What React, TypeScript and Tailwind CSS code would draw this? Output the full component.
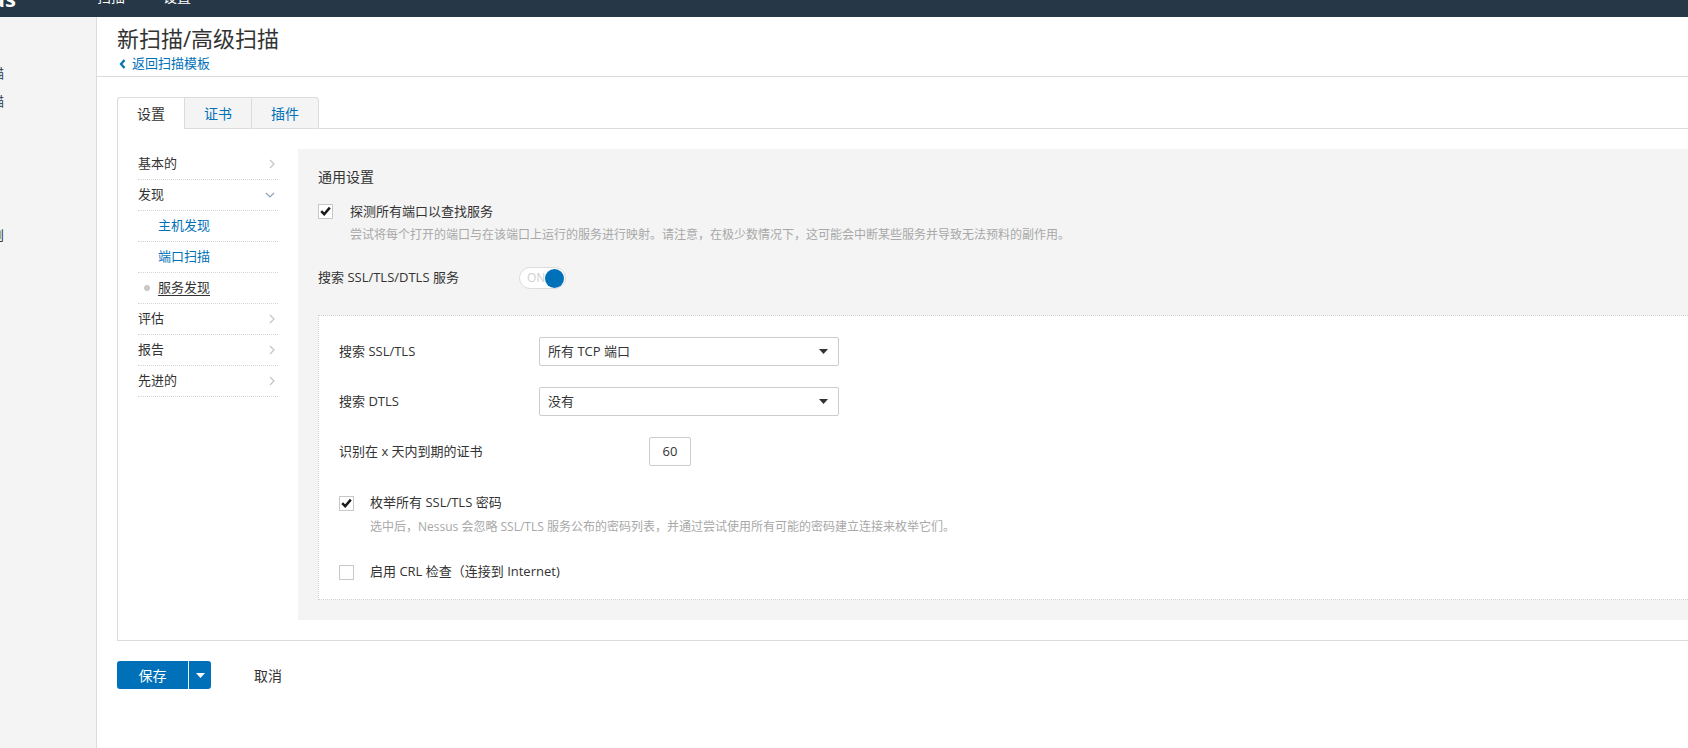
import React from "react";

function ChevronRight() {
  return (
    <svg width="6" height="10" viewBox="0 0 6 10" className="shrink-0">
      <path d="M1 1l4 4-4 4" stroke="#c4c4c4" strokeWidth="1.2" fill="none" />
    </svg>
  );
}

function ChevronDown() {
  return (
    <svg width="10" height="6" viewBox="0 0 10 6" className="shrink-0">
      <path d="M1 1l4 4 4-4" stroke="#8aa4bb" strokeWidth="1.2" fill="none" />
    </svg>
  );
}

function Check() {
  return (
    <svg width="11" height="10" viewBox="0 0 11 10">
      <path d="M1.2 5.2l3 3L9.8 1.6" stroke="#1a1a1a" strokeWidth="2.5" fill="none" strokeLinejoin="miter" />
    </svg>
  );
}

function Checkbox({ checked }: { checked: boolean }) {
  return (
    <div className="w-[15px] h-[15px] shrink-0 bg-white border border-[#c8c8c8] flex items-center justify-center">
      {checked && <Check />}
    </div>
  );
}

function Caret({ color }: { color: string }) {
  return (
    <svg width="9" height="5" viewBox="0 0 9 5">
      <path d="M0 0h9L4.5 5z" fill={color} />
    </svg>
  );
}

function MenuRow({
  label,
  kind,
}: {
  label: string;
  kind: "right" | "down" | "sub" | "current";
}) {
  return (
    <div className="h-[31px] border-b border-dotted border-[#d6d6d6] flex items-center text-[13px]">
      {kind === "sub" && <span className="pl-[20px] text-[#0071b9]">{label}</span>}
      {kind === "current" && (
        <>
          <span className="w-[6px] h-[6px] rounded-full bg-[#c8c8c8] ml-[6px]" />
          <span className="ml-[8px] text-[#333] underline underline-offset-[3px]">{label}</span>
        </>
      )}
      {(kind === "right" || kind === "down") && (
        <>
          <span className="text-[#333]">{label}</span>
          <span className="ml-auto mr-[3px] flex items-center">
            {kind === "right" ? <ChevronRight /> : <ChevronDown />}
          </span>
        </>
      )}
    </div>
  );
}

export default function App() {
  return (
    <div className="w-[1688px] h-[748px] overflow-hidden flex flex-col bg-white text-[#333] font-[family-name:'Open_Sans','Noto_Sans_CJK_SC',sans-serif]">
      {/* top bar */}
      <div className="h-[17px] shrink-0 bg-[#263848] flex overflow-hidden">
        <div className="w-[16px] shrink-0 flex justify-end overflow-hidden">
          <span className="text-[22px] font-bold text-white leading-[22px] -mt-[13px] whitespace-nowrap">
            nessus
          </span>
        </div>
        <span className="ml-[81px] text-white text-[14px] leading-[16px] -mt-[11px] whitespace-nowrap">扫描</span>
        <span className="ml-[38px] text-white text-[14px] leading-[16px] -mt-[11px] whitespace-nowrap">设置</span>
      </div>

      <div className="flex flex-1 min-h-0">
        {/* sidebar */}
        <div className="w-[97px] shrink-0 bg-[#f4f4f4] border-r border-[#dcdcdc] overflow-hidden">
          <div className="-ml-[48px] pt-[42px] text-[13px] leading-[28px] whitespace-nowrap">
            <div className="text-[#2a3a4a]">我的扫描</div>
            <div className="text-[#2a3a4a]">所有扫描</div>
            <div className="text-[#333]">回收站</div>
            <div className="mt-[22px] text-[11px] leading-[28px] text-[#999]">资源</div>
            <div className="text-[#333]">策略</div>
            <div className="text-[#333]">插件规则</div>
          </div>
        </div>

        {/* main */}
        <div className="flex-1 min-w-0 overflow-hidden flex flex-col">
          <div className="px-[20px] pt-[6px] pb-[3px] border-b border-[#dcdcdc]">
            <h1 className="text-[22px] leading-[30px] text-[#333] font-normal">新扫描/高级扫描</h1>
            <div className="flex items-center h-[18px] mt-[2px] text-[13px] text-[#0071b9]">
              <svg width="7" height="10" viewBox="0 0 7 10" className="ml-[2px]">
                <path d="M5.5 1L2 5l3.5 4" stroke="#0071b9" strokeWidth="2.2" fill="none" />
              </svg>
              <span className="ml-[6px]">返回扫描模板</span>
            </div>
          </div>

          <div className="pl-[20px] pt-[20px]">
            <div className="w-[1700px]">
              {/* tabs */}
              <div className="flex h-[32px] text-[14px]">
                <div className="w-[67px] border-l border-t border-[#dcdcdc] bg-white rounded-tl-[3px] flex items-center justify-center text-[#333]">
                  设置
                </div>
                <div className="w-[67px] border-l border-t border-b border-[#dcdcdc] bg-[#f4f4f4] flex items-center justify-center text-[#0071b9]">
                  证书
                </div>
                <div className="w-[68px] border-l border-r border-t border-b border-[#dcdcdc] bg-[#f4f4f4] rounded-tr-[3px] flex items-center justify-center text-[#0071b9]">
                  插件
                </div>
                <div className="flex-1 border-b border-[#dcdcdc]" />
              </div>

              {/* panel */}
              <div className="border-l border-r border-b border-[#dcdcdc] p-[20px] flex">
                <div className="w-[140px] shrink-0">
                  <MenuRow label="基本的" kind="right" />
                  <MenuRow label="发现" kind="down" />
                  <MenuRow label="主机发现" kind="sub" />
                  <MenuRow label="端口扫描" kind="sub" />
                  <MenuRow label="服务发现" kind="current" />
                  <MenuRow label="评估" kind="right" />
                  <MenuRow label="报告" kind="right" />
                  <MenuRow label="先进的" kind="right" />
                </div>

                <div className="flex-1 ml-[20px] bg-[#f4f4f4] px-[20px] pt-[18px] pb-[20px]">
                  <div className="text-[14px] leading-[20px] text-[#333]">通用设置</div>

                  <div className="mt-[14px] flex items-center h-[20px]">
                    <Checkbox checked />
                    <span className="ml-[17px] text-[13px] leading-[20px] text-[#333]">探测所有端口以查找服务</span>
                  </div>
                  <div className="mt-[5px] ml-[32px] text-[12px] leading-[18px] text-[#a8a8a8]">
                    尝试将每个打开的端口与在该端口上运行的服务进行映射。请注意，在极少数情况下，这可能会中断某些服务并导致无法预料的副作用。
                  </div>

                  <div className="mt-[23px] flex items-center h-[22px]">
                    <span className="w-[201px] text-[13px] text-[#333]">搜索 SSL/TLS/DTLS 服务</span>
                    <div className="w-[47px] h-[22px] rounded-full bg-white border border-[#dcdcdc] flex items-center pl-[7px] pr-[1px]">
                      <span className="text-[12px] leading-none text-[#cfcfcf]">ON</span>
                      <span className="ml-auto w-[19px] h-[19px] rounded-full bg-[#0071b9]" />
                    </div>
                  </div>

                  <div className="mt-[26px] bg-white border border-dotted border-[#cfcfcf] pl-[20px] pt-[21px] pb-[17px]">
                    <div className="flex items-center h-[29px]">
                      <span className="w-[200px] text-[13px] text-[#333]">搜索 SSL/TLS</span>
                      <div className="w-[300px] h-[29px] bg-white border border-[#cccccc] rounded-[2px] flex items-center pl-[8px] pr-[10px] text-[13px] text-[#333]">
                        <span>所有 TCP 端口</span>
                        <span className="ml-auto flex"><Caret color="#333" /></span>
                      </div>
                    </div>
                    <div className="mt-[21px] flex items-center h-[29px]">
                      <span className="w-[200px] text-[13px] text-[#333]">搜索 DTLS</span>
                      <div className="w-[300px] h-[29px] bg-white border border-[#cccccc] rounded-[2px] flex items-center pl-[8px] pr-[10px] text-[13px] text-[#333]">
                        <span>没有</span>
                        <span className="ml-auto flex"><Caret color="#333" /></span>
                      </div>
                    </div>
                    <div className="mt-[21px] flex items-center h-[29px]">
                      <span className="w-[310px] text-[13px] text-[#333]">识别在 x 天内到期的证书</span>
                      <div className="w-[42px] h-[29px] bg-white border border-[#cccccc] rounded-[2px] flex items-center justify-center text-[13px] text-[#333]">
                        60
                      </div>
                    </div>

                    <div className="mt-[27px] flex items-center h-[20px]">
                      <Checkbox checked />
                      <span className="ml-[16px] text-[13px] text-[#333]">枚举所有 SSL/TLS 密码</span>
                    </div>
                    <div className="mt-[5px] ml-[31px] text-[12px] leading-[18px] text-[#a8a8a8]">
                      选中后，Nessus 会忽略 SSL/TLS 服务公布的密码列表，并通过尝试使用所有可能的密码建立连接来枚举它们。
                    </div>

                    <div className="mt-[26px] flex items-center h-[20px]">
                      <Checkbox checked={false} />
                      <span className="ml-[16px] text-[13px] text-[#333]">启用 CRL 检查（连接到 Internet)</span>
                    </div>
                  </div>
                </div>
              </div>

              {/* buttons */}
              <div className="mt-[20px] flex items-center">
                <div className="h-[28px] flex rounded-[3px] overflow-hidden">
                  <div className="w-[71px] bg-[#0071b9] text-white text-[14px] flex items-center justify-center">保存</div>
                  <div className="w-[1px] bg-[#e6eef5]" />
                  <div className="w-[22px] bg-[#0071b9] flex items-center justify-center">
                    <Caret color="#ffffff" />
                  </div>
                </div>
                <span className="ml-[43px] text-[14px] text-[#333]">取消</span>
              </div>
            </div>
          </div>
        </div>
      </div>
    </div>
  );
}
